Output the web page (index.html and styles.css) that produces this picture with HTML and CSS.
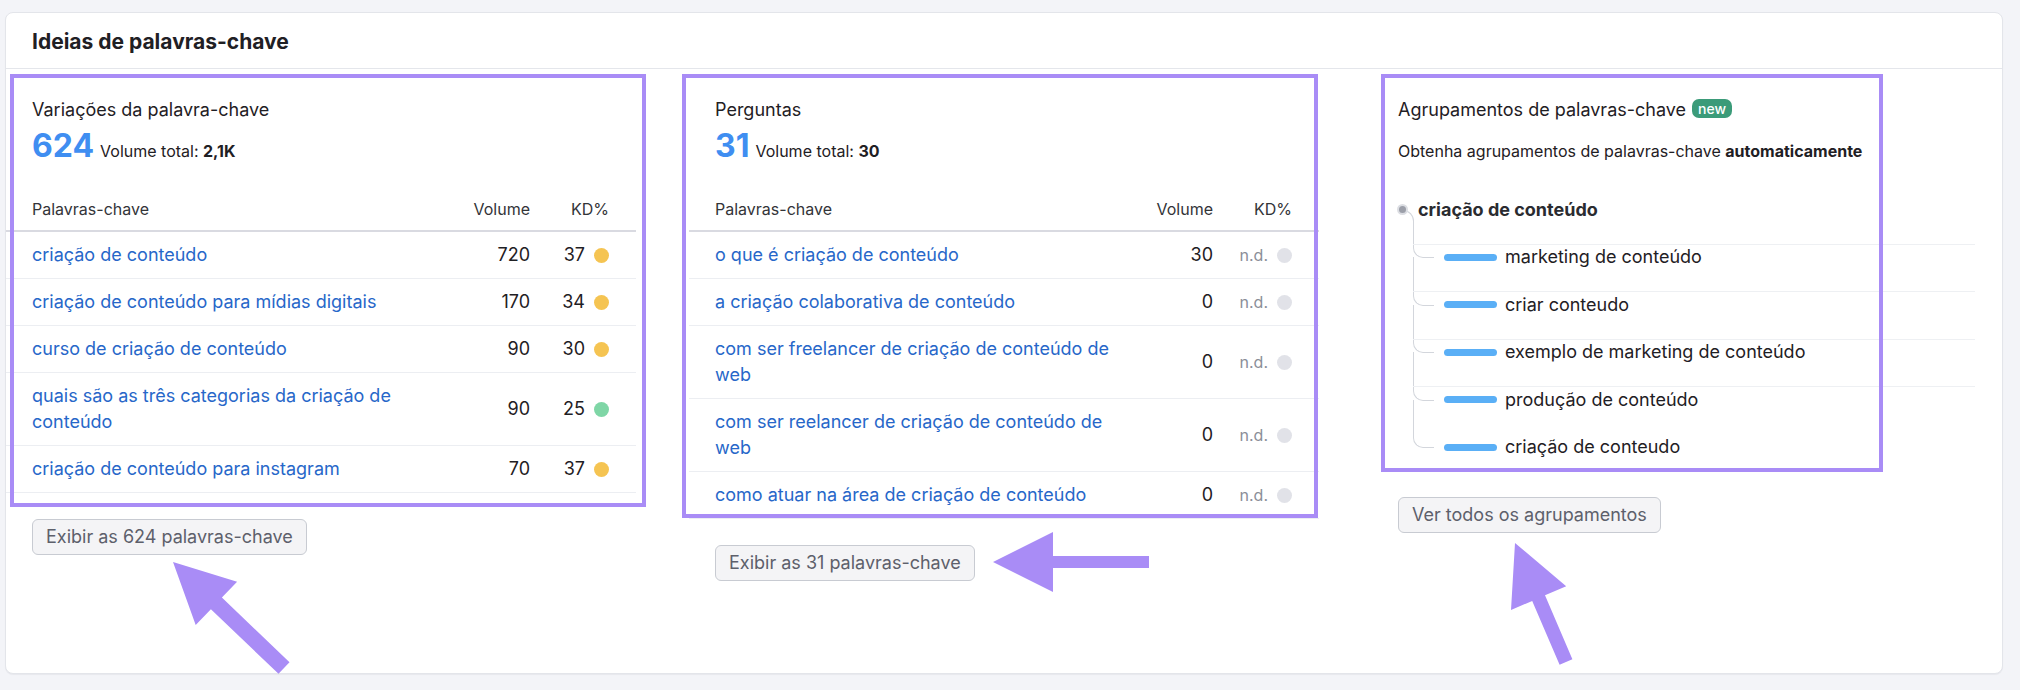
FILE: index.html
```html
<!DOCTYPE html>
<html lang="pt-BR">
<head>
<meta charset="utf-8">
<title>Ideias de palavras-chave</title>
<link rel="stylesheet" href="styles.css">
</head>
<body>
<div class="page">
  <section class="card">
    <header class="card-header">
      <h2 class="card-title">Ideias de palavras-chave</h2>
    </header>
    <div class="columns">
      <div class="col">
        <h3 class="col-title">Variações da palavra-chave</h3>
        <div class="stat"><span class="stat-num">624</span><span class="stat-label">Volume total: <b>2,1K</b></span></div>
        <div class="kw-table">
          <div class="kw-row kw-head"><span>Palavras-chave</span><span class="num">Volume</span><span class="kd">KD%</span></div>
          <div class="kw-row"><a class="kw" href="#">criação de conteúdo</a><span class="num">720</span><span class="kd">37<i class="dot dot-yellow"></i></span></div>
          <div class="kw-row"><a class="kw" href="#">criação de conteúdo para mídias digitais</a><span class="num">170</span><span class="kd">34<i class="dot dot-yellow"></i></span></div>
          <div class="kw-row"><a class="kw" href="#">curso de criação de conteúdo</a><span class="num">90</span><span class="kd">30<i class="dot dot-yellow"></i></span></div>
          <div class="kw-row"><a class="kw" href="#">quais são as três categorias da criação de conteúdo</a><span class="num">90</span><span class="kd">25<i class="dot dot-green"></i></span></div>
          <div class="kw-row"><a class="kw" href="#">criação de conteúdo para instagram</a><span class="num">70</span><span class="kd">37<i class="dot dot-yellow"></i></span></div>
        </div>
        <button class="btn" type="button">Exibir as 624 palavras-chave</button>
      </div>

      <div class="col">
        <h3 class="col-title">Perguntas</h3>
        <div class="stat"><span class="stat-num">31</span><span class="stat-label">Volume total: <b>30</b></span></div>
        <div class="kw-table">
          <div class="kw-row kw-head"><span>Palavras-chave</span><span class="num">Volume</span><span class="kd">KD%</span></div>
          <div class="kw-row"><a class="kw" href="#">o que é criação de conteúdo</a><span class="num">30</span><span class="kd"><span class="nd">n.d.</span><i class="dot dot-gray"></i></span></div>
          <div class="kw-row"><a class="kw" href="#">a criação colaborativa de conteúdo</a><span class="num">0</span><span class="kd"><span class="nd">n.d.</span><i class="dot dot-gray"></i></span></div>
          <div class="kw-row"><a class="kw" href="#">com ser freelancer de criação de conteúdo de web</a><span class="num">0</span><span class="kd"><span class="nd">n.d.</span><i class="dot dot-gray"></i></span></div>
          <div class="kw-row"><a class="kw" href="#">com ser reelancer de criação de conteúdo de web</a><span class="num">0</span><span class="kd"><span class="nd">n.d.</span><i class="dot dot-gray"></i></span></div>
          <div class="kw-row"><a class="kw" href="#">como atuar na área de criação de conteúdo</a><span class="num">0</span><span class="kd"><span class="nd">n.d.</span><i class="dot dot-gray"></i></span></div>
        </div>
        <button class="btn" type="button">Exibir as 31 palavras-chave</button>
      </div>

      <div class="col">
        <h3 class="col-title">Agrupamentos de palavras-chave <span class="badge">new</span></h3>
        <p class="col-desc">Obtenha agrupamentos de palavras-chave <b>automaticamente</b></p>
        <div class="tree">
          <div class="tree-root"><span class="root-dot"></span><span class="root-label">criação de conteúdo</span></div>
          <ul class="tree-list">
            <li class="tree-item"><span class="bar"></span>marketing de conteúdo</li>
            <li class="tree-item"><span class="bar"></span>criar conteudo</li>
            <li class="tree-item"><span class="bar"></span>exemplo de marketing de conteúdo</li>
            <li class="tree-item"><span class="bar"></span>produção de conteúdo</li>
            <li class="tree-item"><span class="bar"></span>criação de conteudo</li>
          </ul>
        </div>
        <button class="btn" type="button">Ver todos os agrupamentos</button>
      </div>
    </div>
  </section>

  <svg class="annotations" width="2020" height="690" viewBox="0 0 2020 690" aria-hidden="true">
    <g fill="none" stroke="#a98cf6" stroke-width="4">
      <rect x="12" y="76" width="632" height="429"/>
      <rect x="684" y="76" width="632" height="440"/>
      <rect x="1383" y="76" width="498" height="394"/>
    </g>
    <g fill="#a98cf6">
      <polygon points="173,562 195.7,625.1 210.9,609.2 278.5,673.8 289.5,662.2 221.9,597.6 237.1,581.7"/>
      <polygon points="993,562 1053,532 1053,556 1149,556 1149,568 1053,568 1053,592"/>
      <polygon points="1515,543 1511,609.9 1532.2,600.9 1559.6,664.8 1572.4,659.2 1545,595.3 1566.2,586.3"/>
    </g>
  </svg>
</div>
</body>
</html>
```

FILE: styles.css
```css
* {
  box-sizing: border-box;
}

html,
body {
  margin: 0;
}

body {
  background: #f3f4f8;
  font-family: Inter, "Noto Sans", sans-serif;
  color: #1f2024;
}

.page {
  position: relative;
  width: 2020px;
  height: 690px;
  padding: 12px 17px 16px 5px;
}

.card {
  height: 662px;
  background: #fff;
  border: 1px solid #e3e5ea;
  border-radius: 8px;
  box-shadow: 0 1px 1px rgba(20, 22, 40, 0.05);
}

.card-header {
  padding: 15px 26px 12px;
  border-bottom: 1px solid #e4e6eb;
}

.card-title {
  margin: 0;
  font-size: 21px;
  line-height: 28px;
  font-weight: 700;
  color: #1f2024;
}

.columns {
  display: grid;
  grid-template-columns: repeat(3, 1fr);
  column-gap: 53px;
}

.col {
  display: flex;
  flex-direction: column;
  padding-top: 29px;
  min-width: 0;
}

.col-title {
  margin: 0;
  padding: 0 27px 0 26px;
  font-size: 18px;
  line-height: 24px;
  font-weight: 400;
  color: #1f2024;
}

.badge {
  display: inline-block;
  height: 19px;
  margin-left: 1px;
  padding: 0 6px;
  border-radius: 7px;
  background: #3b9b79;
  color: #fff;
  font-size: 14px;
  line-height: 19px;
  font-weight: 500;
  vertical-align: 2px;
}

.stat {
  display: flex;
  align-items: baseline;
  margin: 6px 0 24px;
  padding: 0 27px 0 26px;
}

.stat-num {
  font-size: 32px;
  line-height: 36px;
  font-weight: 700;
  color: #3f8ef1;
}

.stat-label {
  margin-left: 6px;
  font-size: 16px;
  color: #1f2024;
}

.stat-label b {
  font-weight: 700;
}

.kw-row {
  display: grid;
  grid-template-columns: 1fr 80px 79px;
  align-items: center;
  padding: 10px 27px 10px 26px;
  border-bottom: 1px solid #eceef2;
  font-size: 18px;
  line-height: 26px;
}

.kw-head {
  padding: 11px 27px 11px 26px;
  border-bottom: 2px solid #d9dae1;
  font-size: 16px;
  line-height: 20px;
  color: #333438;
}

.kw {
  color: #2767c9;
  text-decoration: none;
  padding-right: 8px;
}

.num {
  text-align: right;
}

.kd {
  display: flex;
  justify-content: flex-end;
  align-items: center;
  gap: 9px;
}

.dot {
  display: block;
  width: 15px;
  height: 15px;
  border-radius: 50%;
}

.dot-yellow {
  background: #f5c452;
}

.dot-green {
  background: #7fd6a6;
}

.dot-gray {
  background: #e1e2e8;
}

.nd {
  font-size: 16px;
  color: #8b8e98;
}

.col-desc {
  margin: 19px 0 0;
  padding: 0 27px 0 26px;
  font-size: 16px;
  line-height: 20px;
}

.col-desc b {
  font-weight: 700;
}

.tree {
  margin-top: 25px;
  padding: 0 27px 0 26px;
}

.tree-root {
  position: relative;
  display: flex;
  align-items: center;
  gap: 10px;
  height: 47.5px;
}

.root-dot {
  position: relative;
  z-index: 1;
  width: 11px;
  height: 11px;
  margin-left: -1px;
  border-radius: 50%;
  background: #9c9fa9;
  border: 2px solid #dcdee3;
}

.tree-root::after {
  content: "";
  position: absolute;
  left: 4px;
  top: 23.75px;
  width: 11px;
  height: 23.75px;
  border-top: 1px solid #d3d6dc;
  border-right: 1px solid #d3d6dc;
  border-top-right-radius: 11px;
}

.root-label {
  font-size: 18px;
  line-height: 24px;
  font-weight: 700;
  color: #2a2b30;
}

.tree-list {
  margin: 0 0 0 15px;
  padding: 0;
  list-style: none;
}

.tree-item {
  position: relative;
  display: flex;
  align-items: center;
  height: 47.5px;
  padding-left: 31px;
  font-size: 18px;
  line-height: 24px;
  color: #1f2024;
}

.tree-item::before {
  content: "";
  position: absolute;
  left: 0;
  top: -23.75px;
  width: 20px;
  height: 47.5px;
  border-left: 1px solid #d3d6dc;
  border-bottom: 1px solid #d3d6dc;
  border-bottom-left-radius: 10px;
}

.tree-item:first-child::before {
  top: 0;
  height: 23.75px;
}

.tree-item:not(:last-child)::after {
  content: "";
  position: absolute;
  left: 0;
  right: 0;
  top: 10px;
  height: 1px;
  background: #eef0f3;
}

.bar {
  flex: none;
  width: 53px;
  height: 7px;
  margin-right: 8px;
  border-radius: 4px;
  background: #5aaff6;
}

.btn {
  align-self: flex-start;
  height: 36px;
  margin: 26px 0 0 26px;
  padding: 0 13px;
  border: 1px solid #c8cbd2;
  border-radius: 6px;
  background: #f4f4f6;
  font-family: Inter, "Noto Sans", sans-serif;
  font-size: 18px;
  line-height: 34px;
  color: #5d606b;
  cursor: pointer;
}

.annotations {
  position: absolute;
  left: 0;
  top: 0;
  pointer-events: none;
}
```
